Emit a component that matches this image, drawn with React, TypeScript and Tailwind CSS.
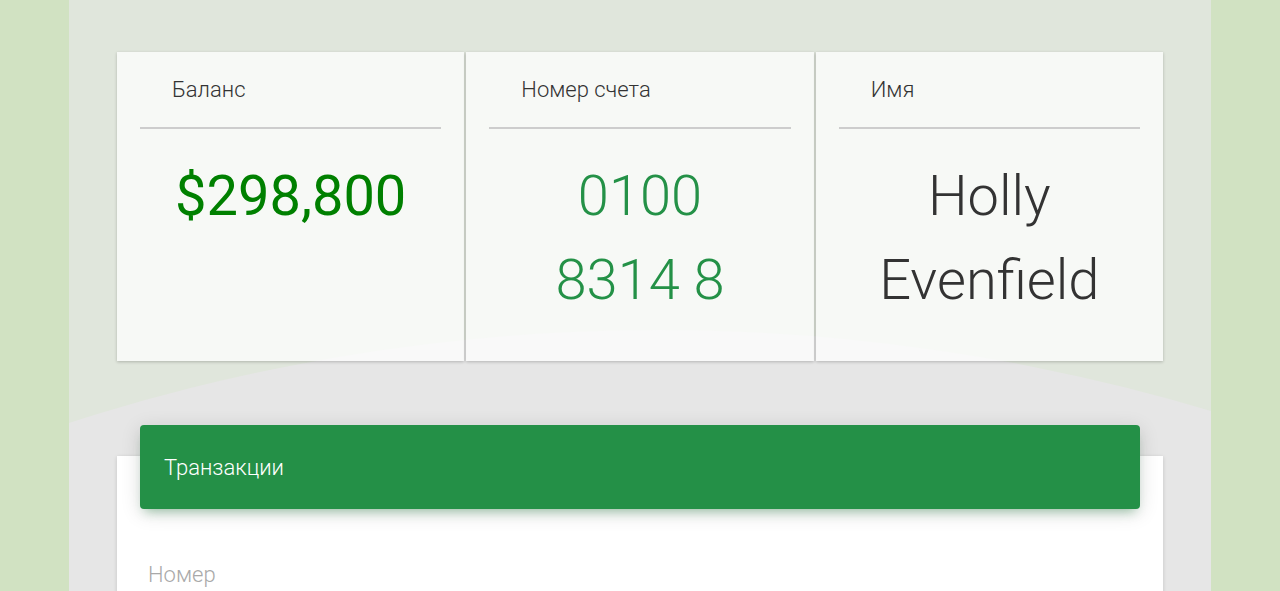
import React from "react";

function InfoCard({ label, children }: { label: string; children: React.ReactNode }) {
  return (
    <div className="bg-white/[0.74] shadow-[0_1px_3px_rgba(0,0,0,0.22)] px-[23px] pt-[21px] pb-[39px]">
      <div className="pl-[32px] pb-[21px] text-[22px] leading-[33px] font-light text-[#333333]">{label}</div>
      <div className="h-[2px] bg-[#cdcdcd]" />
      <div className="mt-[25px] text-center text-[56px] leading-[84px]">{children}</div>
    </div>
  );
}

export default function App() {
  return (
    <div
      className="min-h-screen bg-[#d1e2c2]"
      style={{ fontFamily: "Roboto, 'Noto Sans', 'Liberation Sans', sans-serif" }}
    >
      <div className="relative mx-auto w-[1142px] min-h-[700px] overflow-hidden bg-[#e0e6dc]">
        <div className="absolute left-[-1330px] top-[330px] w-[3840px] h-[3840px] rounded-full bg-[#e6e6e6]" />
        <div className="relative px-[48px] pt-[52px]">
          <div className="grid grid-cols-3 gap-[2px]">
            <InfoCard label="Баланс">
              <span className="font-normal text-[#008000]">$298,800</span>
            </InfoCard>
            <InfoCard label="Номер счета">
              <div className="font-light text-[#249147]">
                <div>0100</div>
                <div>8314 8</div>
              </div>
            </InfoCard>
            <InfoCard label="Имя">
              <span className="font-light text-[#333333]">Holly Evenfield</span>
            </InfoCard>
          </div>

          <div className="mt-[95px] bg-white shadow-[0_1px_4px_rgba(0,0,0,0.15)] min-h-[300px]">
            <div className="relative -top-[31px] mx-[23px] h-[84px] rounded-[4px] bg-[#249047] px-[24px] flex items-center shadow-[0_4px_20px_0_rgba(0,0,0,0.14),0_7px_10px_-5px_rgba(36,144,71,0.4)]">
              <span className="text-[22px] font-light text-white">Транзакции</span>
            </div>
            <div className="px-[31px] mt-[18px]">
              <div className="text-[22px] font-light text-[#a9a9a9] leading-[33px]">Номер</div>
            </div>
          </div>
        </div>
      </div>
    </div>
  );
}
